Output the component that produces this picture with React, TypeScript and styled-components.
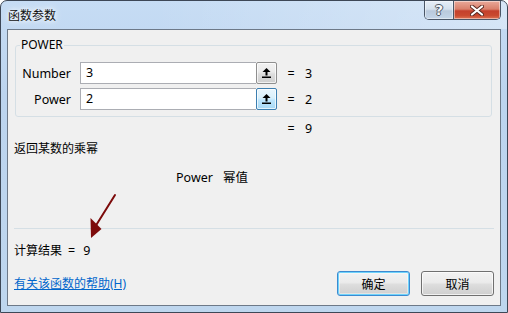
import styled, { createGlobalStyle } from 'styled-components'

const GlobalStyle = createGlobalStyle`
  html, body {
    margin: 0;
    padding: 0;
    background: #ffffff;
  }
  body {
    font-family: 'Noto Sans', 'Noto Sans CJK SC', sans-serif;
    font-size: 12px;
    color: #000000;
  }
  * {
    box-sizing: border-box;
  }
`

const Window = styled.div`
  position: relative;
  width: 508px;
  height: 313px;
  display: flex;
  flex-direction: column;
  border: 1px solid #3d4756;
  border-radius: 7px 7px 0 0;
  background: linear-gradient(180deg, #c6dcf4 0%, #bcd4ee 30%, #bed6ee 100%);
  overflow: hidden;
`

const TitleBar = styled.div`
  height: 28px;
  display: flex;
  align-items: flex-start;
  padding: 0 6px 0 7px;
  background: linear-gradient(90deg, rgba(255, 255, 255, 0) 30%, rgba(255, 255, 255, 0.3) 100%);
`

const Title = styled.div`
  flex: 1;
  margin-top: 6px;
  font-family: 'Noto Sans CJK SC', sans-serif;
  font-size: 12px;
  line-height: 16px;
  color: #111;
  text-shadow: 0 0 4px #fff, 0 0 8px #fff;
`

const CaptionButtons = styled.div`
  display: flex;
  height: 19px;
  border: 1px solid #4a5667;
  border-top: none;
  border-radius: 0 0 5px 5px;
  overflow: hidden;
`

const CaptionButton = styled.div<{ $close?: boolean }>`
  width: ${p => (p.$close ? '47px' : '28px')};
  display: flex;
  align-items: center;
  justify-content: center;
  border-left: ${p => (p.$close ? '1px solid #4a5667' : 'none')};
  background: ${p =>
    p.$close
      ? 'linear-gradient(180deg, #e9a99a 0%, #d9806c 45%, #c4402c 55%, #c9492f 80%, #dd7455 100%)'
      : 'linear-gradient(180deg, #e6eef8 0%, #d5e1ee 45%, #b9c9dc 55%, #c4d5e8 100%)'};
  box-shadow: inset 0 0 0 1px rgba(255, 255, 255, 0.45);
`

const HelpMark = styled.span`
  color: #f4f6f8;
  font-family: 'DejaVu Sans', sans-serif;
  font-weight: bold;
  font-size: 14px;
  line-height: 1;
  text-shadow: 1px 0 0 #4d5866, -1px 0 0 #4d5866, 0 1px 0 #4d5866, 0 -1px 0 #4d5866;
`

const Client = styled.div`
  flex: 1;
  display: flex;
  flex-direction: column;
  margin: 0 6px 6px;
  padding: 0 6px;
  border: 1px solid #6d7988;
  background: #f0f0f0;
`

const Group = styled.fieldset`
  margin: 7px 2px 0 1px;
  padding: 9px 0 6px 0;
  min-width: 0;
  border: 1px solid #d5dfe5;
  border-radius: 3px;
`

const GroupTitle = styled.legend`
  margin-left: 4px;
  padding: 0 1px;
  font-size: 12px;
  line-height: 16px;
`

const ArgList = styled.div`
  display: flex;
  flex-direction: column;
  gap: 4px;
`

const ArgRow = styled.div`
  display: flex;
  align-items: center;
  height: 22px;
`

const ArgLabel = styled.div`
  width: 55px;
  margin-right: 9px;
  text-align: right;
  font-size: 12.5px;
`

const Field = styled.div`
  width: 197px;
  height: 22px;
  display: flex;
`

const FieldText = styled.div`
  flex: 1;
  padding-left: 5px;
  background: #ffffff;
  border: 1px solid #abadb3;
  border-right: none;
  font-size: 12.5px;
  line-height: 20px;
`

const PickButton = styled.div<{ $hot?: boolean }>`
  width: 21px;
  height: 22px;
  display: flex;
  align-items: center;
  justify-content: center;
  border: 1px solid ${p => (p.$hot ? '#3c7fb1' : '#8f8f8f')};
  border-radius: 2px;
  background: ${p =>
    p.$hot
      ? 'linear-gradient(180deg, #eaf6fd 0%, #d9f0fc 45%, #bee6fd 55%, #a7d9f5 100%)'
      : 'linear-gradient(180deg, #f2f2f2 0%, #ebebeb 45%, #dddddd 55%, #cfcfcf 100%)'};
  box-shadow: inset 0 0 0 1px rgba(255, 255, 255, 0.7);
`

const Equals = styled.span`
  width: 8px;
  margin-left: 10px;
  text-align: center;
  font-size: 12.5px;
`

const Value = styled.span`
  margin-left: 10px;
  font-size: 12.5px;
`

const TotalRow = styled.div`
  display: flex;
  margin-top: 4px;
  padding-left: 263px;
  line-height: 16px;
`

const Description = styled.div`
  margin-top: 4px;
  line-height: 16px;
`

const ParamHelp = styled.div`
  display: flex;
  gap: 10px;
  margin-top: 13px;
  padding-left: 162px;
  line-height: 16px;
  font-size: 12.5px;
`

const Separator = styled.div`
  height: 1px;
  margin-top: 42px;
  background: #d5dfe5;
`

const ResultRow = styled.div`
  display: flex;
  margin-top: 14px;
  line-height: 16px;
`

const ResultEquals = styled.span`
  margin-left: 6px;
  font-size: 12.5px;
`

const ResultValue = styled.span`
  margin-left: 8px;
  font-size: 12.5px;
`

const Footer = styled.div`
  display: flex;
  align-items: center;
  margin-top: 12px;
`

const HelpLink = styled.a`
  flex: 1;
  color: #0066cc;
  text-decoration: underline;
  line-height: 16px;
  cursor: pointer;
`

const Buttons = styled.div`
  display: flex;
  gap: 11px;
`

const DialogButton = styled.button<{ $default?: boolean }>`
  width: 73px;
  height: 25px;
  padding: 0;
  font-family: 'Noto Sans CJK SC', sans-serif;
  font-size: 12px;
  color: #000;
  border: 1px solid ${p => (p.$default ? '#3c8ad0' : '#707070')};
  border-radius: 3px;
  background: linear-gradient(180deg, #f2f2f2 0%, #ebebeb 45%, #dddddd 55%, #cfcfcf 100%);
  box-shadow: ${p =>
    p.$default ? 'inset 0 0 0 1px #6fd3fb, inset 0 0 0 2px rgba(255,255,255,0.4)' : 'inset 0 0 0 1px rgba(255,255,255,0.7)'};
`

const Annotation = styled.svg`
  position: absolute;
  left: -1px;
  top: -1px;
  pointer-events: none;
`

const UpArrow = () => (
  <svg width="9" height="10" viewBox="0 0 9 10">
    <polygon points="4.5,0 8.5,4 0.5,4" fill="#000" />
    <rect x="3.5" y="3.5" width="2" height="4" fill="#000" />
    <rect x="0" y="8.5" width="9" height="1.5" fill="#000" />
  </svg>
)

const CloseGlyph = () => (
  <svg width="14" height="11" viewBox="0 0 14 11">
    <path d="M2 1.5 L12 9.5 M12 1.5 L2 9.5" stroke="#5a2a22" strokeWidth="4" strokeLinecap="round" />
    <path d="M2 1.5 L12 9.5 M12 1.5 L2 9.5" stroke="#ffffff" strokeWidth="2.2" strokeLinecap="round" />
  </svg>
)

const args = [
  { name: 'Number', value: '3', hot: false },
  { name: 'Power', value: '2', hot: true },
]

const App = () => {
  return (
    <>
      <GlobalStyle />
      <Window>
        <TitleBar>
          <Title>函数参数</Title>
          <CaptionButtons>
            <CaptionButton>
              <HelpMark>?</HelpMark>
            </CaptionButton>
            <CaptionButton $close>
              <CloseGlyph />
            </CaptionButton>
          </CaptionButtons>
        </TitleBar>
        <Client>
          <Group>
            <GroupTitle>POWER</GroupTitle>
            <ArgList>
              {args.map(a => (
                <ArgRow key={a.name}>
                  <ArgLabel>{a.name}</ArgLabel>
                  <Field>
                    <FieldText>{a.value}</FieldText>
                    <PickButton $hot={a.hot}>
                      <UpArrow />
                    </PickButton>
                  </Field>
                  <Equals>=</Equals>
                  <Value>{a.value}</Value>
                </ArgRow>
              ))}
            </ArgList>
          </Group>
          <TotalRow>
            <Equals>=</Equals>
            <Value>9</Value>
          </TotalRow>
          <Description>返回某数的乘幂</Description>
          <ParamHelp>
            <span>Power</span>
            <span>幂值</span>
          </ParamHelp>
          <Separator />
          <ResultRow>
            <span>计算结果</span>
            <ResultEquals>=</ResultEquals>
            <ResultValue>9</ResultValue>
          </ResultRow>
          <Footer>
            <HelpLink>有关该函数的帮助(H)</HelpLink>
            <Buttons>
              <DialogButton $default>确定</DialogButton>
              <DialogButton>取消</DialogButton>
            </Buttons>
          </Footer>
        </Client>
        <Annotation width="508" height="313" viewBox="0 0 508 313">
          <line x1="115" y1="195" x2="95" y2="227" stroke="#7d0b0b" strokeWidth="2" strokeLinecap="round" />
          <polygon points="91,238 90.5,218 101.5,229" fill="#7d0b0b" />
        </Annotation>
      </Window>
    </>
  )
}

export default App
